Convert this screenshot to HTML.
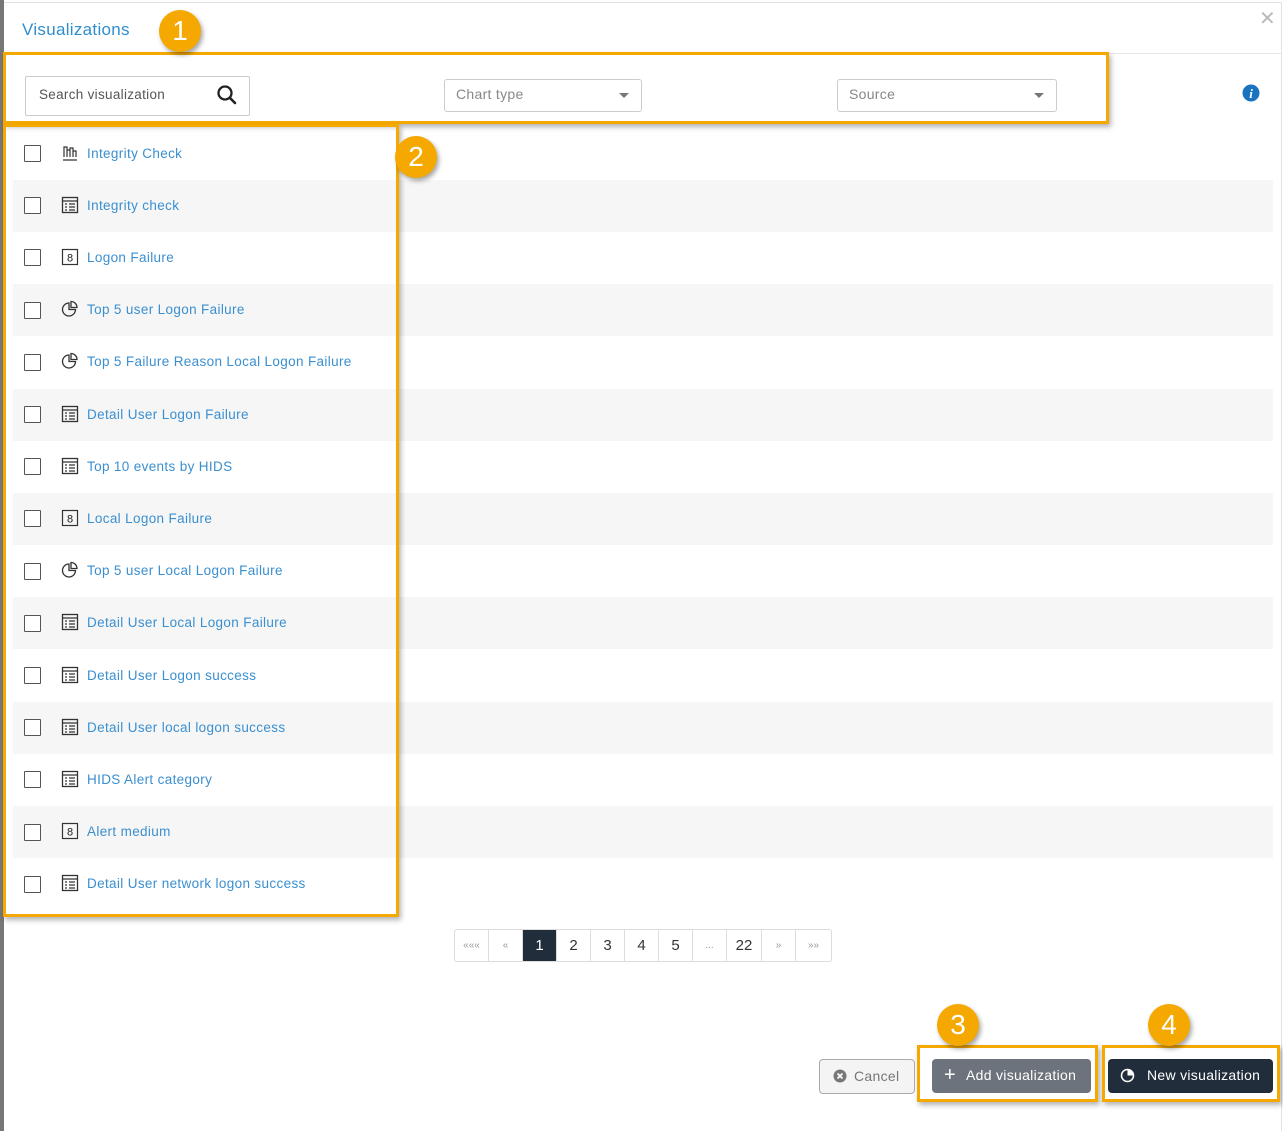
<!DOCTYPE html>
<html><head><meta charset="utf-8"><style>
*{margin:0;padding:0;box-sizing:border-box}
body{width:1283px;height:1131px;background:#fff;position:relative;overflow:hidden;font-family:"Liberation Sans",sans-serif}
.a{position:absolute}
.row{position:absolute;left:13px;width:1260px;height:52px}
.g{background:#f6f6f6}
.cb{position:absolute;left:24px;width:17px;height:17px;border:1.5px solid #555;background:#fff;border-radius:1px}
.ic{position:absolute;left:61px;width:18px;height:18px}
.lbl{position:absolute;left:87px;font-size:13.5px;color:#3a8fd0;white-space:nowrap;letter-spacing:0.35px;margin-top:1px}
.ob{position:absolute;border:3px solid #f5a800;box-shadow:2px 3px 5px rgba(0,0,0,.3)}
.bd{position:absolute;width:42px;height:42px;border-radius:50%;background:#f5a800;color:#fff;font-size:28px;text-align:center;line-height:42px;box-shadow:2px 3px 5px rgba(0,0,0,.35)}
.sel{position:absolute;top:79px;height:33px;border:1px solid #ccc;border-radius:3px;font-size:14px;color:#888;padding:6px 11px;letter-spacing:0.3px}
.sel:after{content:"";position:absolute;right:12px;top:13px;border:5px solid transparent;border-top:5px solid #777}
.pg{position:absolute;top:929px;left:454px;height:33px;display:flex;border:1px solid #ddd;border-radius:3px}
.pg div{height:31px;border-right:1px solid #ddd;text-align:center;line-height:31px;font-size:15px;color:#333}
</style></head><body>
<div class="a" style="left:0;top:0;width:4px;height:1131px;background:#777"></div>
<div class="a" style="left:4px;top:2px;width:1278px;height:1px;background:#e2e2e2"></div>
<div class="a" style="left:1281px;top:2px;width:1px;height:1129px;background:#e2e2e2"></div>
<div class="a" style="left:4px;top:53px;width:1277px;height:1px;background:#e5e5e5"></div>
<div class="a" style="left:22px;top:20px;font-size:17px;color:#2f8ed0;letter-spacing:0.3px">Visualizations</div>
<div class="a" style="left:1259px;top:6px;font-size:20px;color:#bbb">✕</div>

<div class="a" style="left:25px;top:76px;width:225px;height:40px;border:1px solid #ccc;border-radius:2px"></div>
<div class="a" style="left:39px;top:87px;font-size:13.5px;color:#555;letter-spacing:0.3px">Search visualization</div>
<svg class="a" style="left:216px;top:84px" width="22" height="22" viewBox="0 0 22 22"><circle cx="9" cy="9" r="6.5" fill="none" stroke="#222" stroke-width="2.3"/><path d="M14 14l5 5" stroke="#222" stroke-width="2.6" stroke-linecap="round"/></svg>
<div class="sel" style="left:444px;width:198px">Chart type</div>
<div class="sel" style="left:837px;width:220px">Source</div>
<svg class="a" style="left:1242px;top:84px" width="18" height="18" viewBox="0 0 18 18"><circle cx="9" cy="9" r="8.5" fill="#1a73c0"/><text x="9" y="14" font-size="13" font-weight="bold" font-style="italic" fill="#fff" text-anchor="middle" font-family="Liberation Serif">i</text></svg>

<div class="row" style="top:127px"></div>
<div class="row g" style="top:180px"></div>
<div class="row g" style="top:284px"></div>
<div class="row g" style="top:389px"></div>
<div class="row g" style="top:493px"></div>
<div class="row g" style="top:597px"></div>
<div class="row g" style="top:702px"></div>
<div class="row g" style="top:806px"></div>

<div class="cb" style="top:145px"></div><svg class="ic" style="top:144px" viewBox="0 0 18 18"><path d="M2 16h14M3 13V3h3v10M6 13V6h3v7M9 13V4h3v9M12 13V7h3v6" fill="none" stroke="#333" stroke-width="1.2"/></svg><div class="lbl" style="top:145px">Integrity Check</div>
<div class="cb" style="top:197px"></div><svg class="ic" style="top:196px" viewBox="0 0 18 18"><rect x="1.5" y="1.5" width="15" height="15" fill="none" stroke="#333" stroke-width="1.3"/><path d="M1.5 5h15M4 8h2M8 8h6M4 11h2M8 11h6M4 14h2M8 14h6" stroke="#333" stroke-width="1.2"/></svg><div class="lbl" style="top:197px">Integrity check</div>
<div class="cb" style="top:249px"></div><svg class="ic" style="top:248px" viewBox="0 0 18 18"><rect x="1.5" y="1.5" width="15" height="15" fill="none" stroke="#333" stroke-width="1.2"/><text x="9" y="13.5" font-size="11" text-anchor="middle" fill="#222" font-family="Liberation Sans">8</text></svg><div class="lbl" style="top:249px">Logon Failure</div>
<div class="cb" style="top:302px"></div><svg class="ic" style="top:300px" viewBox="0 0 18 18"><path d="M8 3a6.5 6.5 0 1 0 6.5 6.5H8z M10 1.5v6h6a6 6 0 0 0-6-6z" fill="none" stroke="#333" stroke-width="1.3"/></svg><div class="lbl" style="top:301px">Top 5 user Logon Failure</div>
<div class="cb" style="top:354px"></div><svg class="ic" style="top:352px" viewBox="0 0 18 18"><path d="M8 3a6.5 6.5 0 1 0 6.5 6.5H8z M10 1.5v6h6a6 6 0 0 0-6-6z" fill="none" stroke="#333" stroke-width="1.3"/></svg><div class="lbl" style="top:353px">Top 5 Failure Reason Local Logon Failure</div>
<div class="cb" style="top:406px"></div><svg class="ic" style="top:405px" viewBox="0 0 18 18"><rect x="1.5" y="1.5" width="15" height="15" fill="none" stroke="#333" stroke-width="1.3"/><path d="M1.5 5h15M4 8h2M8 8h6M4 11h2M8 11h6M4 14h2M8 14h6" stroke="#333" stroke-width="1.2"/></svg><div class="lbl" style="top:406px">Detail User Logon Failure</div>
<div class="cb" style="top:458px"></div><svg class="ic" style="top:457px" viewBox="0 0 18 18"><rect x="1.5" y="1.5" width="15" height="15" fill="none" stroke="#333" stroke-width="1.3"/><path d="M1.5 5h15M4 8h2M8 8h6M4 11h2M8 11h6M4 14h2M8 14h6" stroke="#333" stroke-width="1.2"/></svg><div class="lbl" style="top:458px">Top 10 events by HIDS</div>
<div class="cb" style="top:510px"></div><svg class="ic" style="top:509px" viewBox="0 0 18 18"><rect x="1.5" y="1.5" width="15" height="15" fill="none" stroke="#333" stroke-width="1.2"/><text x="9" y="13.5" font-size="11" text-anchor="middle" fill="#222" font-family="Liberation Sans">8</text></svg><div class="lbl" style="top:510px">Local Logon Failure</div>
<div class="cb" style="top:563px"></div><svg class="ic" style="top:561px" viewBox="0 0 18 18"><path d="M8 3a6.5 6.5 0 1 0 6.5 6.5H8z M10 1.5v6h6a6 6 0 0 0-6-6z" fill="none" stroke="#333" stroke-width="1.3"/></svg><div class="lbl" style="top:562px">Top 5 user Local Logon Failure</div>
<div class="cb" style="top:615px"></div><svg class="ic" style="top:613px" viewBox="0 0 18 18"><rect x="1.5" y="1.5" width="15" height="15" fill="none" stroke="#333" stroke-width="1.3"/><path d="M1.5 5h15M4 8h2M8 8h6M4 11h2M8 11h6M4 14h2M8 14h6" stroke="#333" stroke-width="1.2"/></svg><div class="lbl" style="top:614px">Detail User Local Logon Failure</div>
<div class="cb" style="top:667px"></div><svg class="ic" style="top:666px" viewBox="0 0 18 18"><rect x="1.5" y="1.5" width="15" height="15" fill="none" stroke="#333" stroke-width="1.3"/><path d="M1.5 5h15M4 8h2M8 8h6M4 11h2M8 11h6M4 14h2M8 14h6" stroke="#333" stroke-width="1.2"/></svg><div class="lbl" style="top:667px">Detail User Logon success</div>
<div class="cb" style="top:719px"></div><svg class="ic" style="top:718px" viewBox="0 0 18 18"><rect x="1.5" y="1.5" width="15" height="15" fill="none" stroke="#333" stroke-width="1.3"/><path d="M1.5 5h15M4 8h2M8 8h6M4 11h2M8 11h6M4 14h2M8 14h6" stroke="#333" stroke-width="1.2"/></svg><div class="lbl" style="top:719px">Detail User local logon success</div>
<div class="cb" style="top:771px"></div><svg class="ic" style="top:770px" viewBox="0 0 18 18"><rect x="1.5" y="1.5" width="15" height="15" fill="none" stroke="#333" stroke-width="1.3"/><path d="M1.5 5h15M4 8h2M8 8h6M4 11h2M8 11h6M4 14h2M8 14h6" stroke="#333" stroke-width="1.2"/></svg><div class="lbl" style="top:771px">HIDS Alert category</div>
<div class="cb" style="top:824px"></div><svg class="ic" style="top:822px" viewBox="0 0 18 18"><rect x="1.5" y="1.5" width="15" height="15" fill="none" stroke="#333" stroke-width="1.2"/><text x="9" y="13.5" font-size="11" text-anchor="middle" fill="#222" font-family="Liberation Sans">8</text></svg><div class="lbl" style="top:823px">Alert medium</div>
<div class="cb" style="top:876px"></div><svg class="ic" style="top:874px" viewBox="0 0 18 18"><rect x="1.5" y="1.5" width="15" height="15" fill="none" stroke="#333" stroke-width="1.3"/><path d="M1.5 5h15M4 8h2M8 8h6M4 11h2M8 11h6M4 14h2M8 14h6" stroke="#333" stroke-width="1.2"/></svg><div class="lbl" style="top:875px">Detail User network logon success</div>

<div class="pg">
<div style="width:34px;font-size:10px;color:#999">«««</div>
<div style="width:34px;font-size:10px;color:#999">«</div>
<div style="width:34px;background:#222d3b;color:#fff">1</div>
<div style="width:34px">2</div><div style="width:34px">3</div><div style="width:34px">4</div><div style="width:34px">5</div>
<div style="width:34px;font-size:10px;color:#999">...</div>
<div style="width:35px">22</div>
<div style="width:34px;font-size:10px;color:#999">»</div>
<div style="width:35px;font-size:10px;color:#999;border-right:none">»»</div>
</div>

<div class="a" style="left:819px;top:1059px;width:96px;height:35px;border:1px solid #aaa;border-radius:4px;background:#f4f4f4;font-size:14px;color:#777;padding:8px 0 0 34px;letter-spacing:0.3px">Cancel</div>
<svg class="a" style="left:833px;top:1069px" width="14" height="14" viewBox="0 0 14 14"><circle cx="7" cy="7" r="6.5" fill="#777"/><path d="M4.5 4.5l5 5M9.5 4.5l-5 5" stroke="#fff" stroke-width="1.6"/></svg>
<div class="a" style="left:932px;top:1059px;width:159px;height:34px;border-radius:4px;background:#6c737c;color:#fff;font-size:14px;padding:8px 0 0 34px;letter-spacing:0.3px">Add visualization</div>
<div class="a" style="left:944px;top:1064px;color:#fff;font-size:20px">+</div>
<div class="a" style="left:1108px;top:1059px;width:165px;height:34px;border-radius:4px;background:#222d3b;color:#fff;font-size:14px;padding:8px 0 0 39px;letter-spacing:0.3px">New visualization</div>
<svg class="a" style="left:1120px;top:1068px" width="15" height="15" viewBox="0 0 15 15"><circle cx="7.5" cy="7.5" r="6" fill="none" stroke="#fff" stroke-width="1.5"/><path d="M7.5 1.5v6h6a6 6 0 0 0-6-6z" fill="#fff"/></svg>

<div class="ob" style="left:3px;top:52px;width:1106px;height:72px"></div>
<div class="ob" style="left:3px;top:124px;width:396px;height:793px"></div>
<div class="ob" style="left:917px;top:1045px;width:181px;height:57px"></div>
<div class="ob" style="left:1102px;top:1045px;width:178px;height:57px"></div>
<div class="bd" style="left:159px;top:10px">1</div>
<div class="bd" style="left:395px;top:136px">2</div>
<div class="bd" style="left:937px;top:1004px">3</div>
<div class="bd" style="left:1148px;top:1004px">4</div>
</body></html>
